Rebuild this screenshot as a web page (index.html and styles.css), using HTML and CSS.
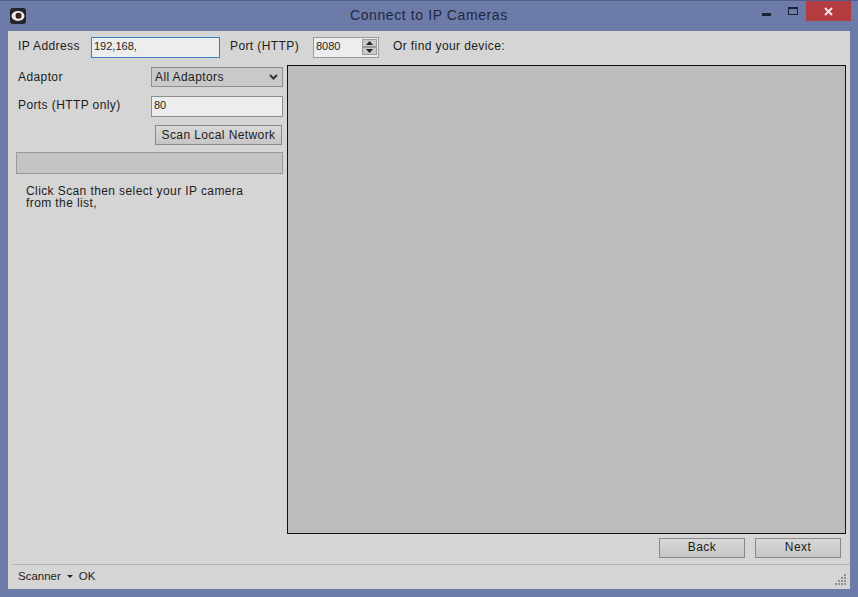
FILE: index.html
```html
<!DOCTYPE html>
<html lang="en">
<head>
<meta charset="utf-8">
<title>Connect to IP Cameras</title>
<link rel="stylesheet" href="styles.css">
</head>
<body>
<div class="window">
  <header class="titlebar">
    <svg class="app-icon" width="16" height="16" viewBox="0 0 16 16">
      <rect width="16" height="16" rx="3" fill="#23232a"/>
      <ellipse cx="8" cy="8" rx="6.500" ry="5" fill="#ececec"/>
      <circle cx="8.500" cy="7.800" r="3" fill="#241611"/>
      <circle cx="8.500" cy="7.800" r="1.800" fill="#6e3626"/>
      <circle cx="8.500" cy="7.800" r="0.800" fill="#140c0a"/>
    </svg>
    <div class="title">Connect to IP Cameras</div>
    <div class="controls">
      <span class="min"></span>
      <span class="max"></span>
      <span class="close">
        <svg width="9" height="9" viewBox="0 0 9 9"><path d="M1 1L8 8M8 1L1 8" stroke="#f6e8e6" stroke-width="2"/></svg>
      </span>
    </div>
  </header>
  <div class="client">
    <div class="toprow">
      <label class="lbl lbl-ip">IP Address</label>
      <div class="field field-ip">192,168,</div>
      <label class="lbl lbl-port">Port (HTTP)</label>
      <div class="field spin">
        <span class="spin-val">8080</span>
        <span class="spin-btns">
          <span class="spin-btn"><svg width="7" height="4" viewBox="0 0 7 4"><path d="M3.500 0L7 4H0Z" fill="#222"/></svg></span>
          <span class="spin-btn"><svg width="7" height="4" viewBox="0 0 7 4"><path d="M0 0H7L3.500 4Z" fill="#222"/></svg></span>
        </span>
      </div>
      <label class="lbl lbl-find">Or find your device:</label>
    </div>
    <div class="main">
      <aside class="side">
        <div class="form-row">
          <label class="lbl">Adaptor</label>
          <div class="select">All Adaptors
            <svg width="9" height="6" viewBox="0 0 9 6"><path d="M1 1L4.500 4.500L8 1" fill="none" stroke="#333" stroke-width="2"/></svg>
          </div>
        </div>
        <div class="form-row row-ports">
          <label class="lbl">Ports (HTTP only)</label>
          <div class="field ports">80</div>
        </div>
        <div class="scan-row"><button class="btn scan">Scan Local Network</button></div>
        <div class="progress"></div>
        <p class="hint">Click Scan then select your IP camera<br>from the list,</p>
      </aside>
      <section class="panel-col">
        <div class="panel"></div>
        <div class="nav">
          <button class="btn nav-btn">Back</button>
          <button class="btn nav-btn">Next</button>
        </div>
      </section>
    </div>
    <footer class="status">
      <span>Scanner</span>
      <svg class="caret" width="6" height="3" viewBox="0 0 6 3"><path d="M0 0H6L3 3Z" fill="#222"/></svg>
      <span>OK</span>
      <svg class="grip" width="14" height="14" viewBox="0 0 14 14" fill="#8f8f8f">
        <rect x="10" y="1" width="2" height="2"/><rect x="7" y="4" width="2" height="2"/><rect x="10" y="4" width="2" height="2"/>
        <rect x="4" y="7" width="2" height="2"/><rect x="7" y="7" width="2" height="2"/><rect x="10" y="7" width="2" height="2"/>
        <rect x="1" y="10" width="2" height="2"/><rect x="4" y="10" width="2" height="2"/><rect x="7" y="10" width="2" height="2"/><rect x="10" y="10" width="2" height="2"/>
      </svg>
    </footer>
  </div>
</div>
</body>
</html>
```

FILE: styles.css
```css
* { box-sizing: border-box; }
html, body { margin: 0; padding: 0; }
body {
  width: 858px;
  height: 597px;
  overflow: hidden;
  font-family: "Liberation Sans", Arial, sans-serif;
  font-size: 12px;
  letter-spacing: 0.4px;
  color: #1c1c1c;
}
.window {
  width: 858px;
  height: 597px;
  background: #6c7ba7;
  border-top: 1px solid #4f5d88;
  padding: 0 8px 8px;
  display: flex;
  flex-direction: column;
}
.titlebar {
  height: 30px;
  flex: none;
  display: flex;
  align-items: flex-start;
  position: relative;
}
.app-icon { margin: 7px 0 0 2px; }
.title {
  position: absolute;
  left: 342px;
  top: 6px;
  font-size: 14px;
  letter-spacing: 0.6px;
  color: #22283f;
  white-space: nowrap;
}
.controls {
  margin-left: auto;
  display: flex;
  align-items: flex-start;
}
.min {
  width: 9px;
  height: 3px;
  background: #1b2238;
  margin: 12px 0 0 0;
}
.max {
  width: 10px;
  height: 8px;
  border: 1px solid #1b2238;
  border-top-width: 2px;
  margin: 6px 0 0 17px;
}
.close {
  width: 45px;
  height: 20px;
  background: #b23c40;
  margin: 0 -1px 0 8px;
  display: flex;
  align-items: center;
  justify-content: center;
}
.client {
  flex: 1;
  display: flex;
  flex-direction: column;
  background: #d5d5d5;
}
.lbl { white-space: nowrap; }
.toprow {
  flex: none;
  height: 34px;
  padding: 6px 0 0 10px;
  display: flex;
  align-items: flex-start;
}
.toprow .lbl { line-height: 18px; }
.field {
  background: #ededed;
  border: 1px solid #8e8e8e;
  height: 21px;
  line-height: 17px;
  font-size: 11px;
  padding: 0 2px;
  letter-spacing: 0;
}
.lbl-ip { width: 73px; }
.field-ip {
  width: 129px;
  border-color: #3a7fc0;
}
.lbl-port { margin-left: 10px; width: 83px; }
.spin {
  width: 66px;
  display: flex;
  justify-content: space-between;
  padding-right: 1px;
  border-color: #9a9a9a;
}
.spin-btns {
  width: 15px;
  display: flex;
  flex-direction: column;
  margin-top: 1px;
}
.spin-btn {
  height: 8px;
  background: #c9c9c9;
  border: 1px solid #9a9a9a;
  display: flex;
  align-items: center;
  justify-content: center;
}
.spin-btn svg { width: 7px; height: 4px; }
.lbl-find { margin-left: 14px; }
.main {
  flex: 1;
  display: flex;
  min-height: 0;
}
.side {
  width: 279px;
  flex: none;
  padding: 2px 4px 0 8px;
}
.form-row {
  display: flex;
  align-items: center;
  justify-content: space-between;
  padding-left: 2px;
  height: 20px;
  margin-bottom: 9px;
}
.form-row .lbl { margin-top: -1px; }
.row-ports { height: 21px; margin-bottom: 8px; }
.row-ports .lbl { margin-top: -3px; }
.select {
  width: 132px;
  height: 20px;
  background: #c9c9c9;
  border: 1px solid #8e8e8e;
  display: flex;
  align-items: center;
  justify-content: space-between;
  padding: 0 4px 1px 3px;
}
.ports { width: 132px; }
.scan-row {
  display: flex;
  justify-content: flex-end;
  padding-right: 1px;
}
.btn {
  font: inherit;
  letter-spacing: inherit;
  color: inherit;
  background: linear-gradient(#d8d8d8, #c6c6c6);
  border: 1px solid #8a8a8a;
  padding: 0 0 2px;
  height: 20px;
}
.scan { width: 127px; padding: 0; }
.progress {
  width: 267px;
  height: 22px;
  margin-top: 7px;
  background: #c4c4c4;
  border: 1px solid #999;
}
.hint {
  margin: 11px 0 0 10px;
  line-height: 12px;
}
.panel-col {
  flex: 1;
  display: flex;
  flex-direction: column;
  min-width: 0;
  padding-right: 4px;
}
.panel {
  flex: 1;
  background: #bcbcbc;
  border: 1px solid #111;
}
.nav {
  flex: none;
  height: 30px;
  padding: 4px 5px 0 0;
  display: flex;
  justify-content: flex-end;
  gap: 10px;
}
.nav-btn { width: 86px; }
.status {
  flex: none;
  height: 25px;
  margin-left: 4px;
  border-top: 1px solid #b4b4b4;
  padding: 0 2px 2px 6px;
  display: flex;
  align-items: center;
  gap: 6px;
  font-size: 11.5px;
  letter-spacing: 0;
  position: relative;
}
.caret { margin-top: 1px; }
.grip { margin-left: auto; margin-top: 8px; }
```
